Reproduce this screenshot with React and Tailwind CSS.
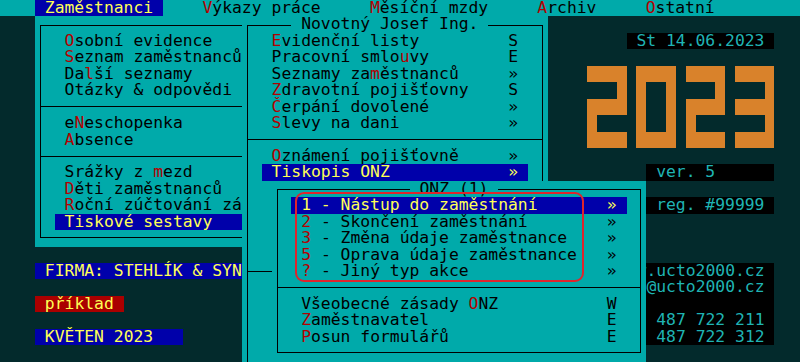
import React from "react";

// text-mode screen: one cell = 9.86px x 16.45px, column 0 starts at x = 5.42px

function K({ children }) {
  return <span className="text-[#b40000]">{children}</span>;
}

// label with one red hotkey letter at index k
function Hot({ text, k }) {
  if (k == null) return text;
  return (
    <>
      {text.slice(0, k)}
      <K>{text[k]}</K>
      {text.slice(k + 1)}
    </>
  );
}

function Sep() {
  return (
    <div className="flex h-[16.45px] items-center">
      <div className="h-px w-full bg-black" />
    </div>
  );
}

function Blank() {
  return <div className="h-[16.45px]" />;
}

function Win({ className, title, titleClass, children }) {
  return (
    <div className={"bg-[#00aaaa] px-[4.93px] py-[8.23px] " + className}>
      <div className="h-full border border-black text-black">
        <div className="-mt-[9.23px] flex h-[16.45px]">
          {title && (
            <span className={"whitespace-pre bg-[#00aaaa] " + titleClass}>{title}</span>
          )}
        </div>
        {children}
      </div>
    </div>
  );
}

function LeftItem({ text, k }) {
  return (
    <div className="h-[16.45px] whitespace-pre pl-[23.65px]">
      <Hot text={text} k={k} />
    </div>
  );
}

function MidItem({ text, k, sc }) {
  return (
    <div className="flex h-[16.45px] whitespace-pre pl-[23.65px]">
      <span className="w-[236.64px] shrink-0">
        <Hot text={text} k={k} />
      </span>
      <span>{sc}</span>
    </div>
  );
}

function OnzItem({ text, k, sc }) {
  return (
    <div className="flex h-[16.45px] whitespace-pre pl-[23.65px]">
      <span className="w-[305.66px] shrink-0">
        <Hot text={text} k={k} />
      </span>
      <span>{sc}</span>
    </div>
  );
}

const DIGITS = {
  2: ["1111", "0001", "1111", "1000", "1111"],
  0: ["1111", "1001", "1001", "1001", "1111"],
  3: ["1111", "0001", "1111", "0001", "1111"],
};

function BigDigit({ d }) {
  const cells = DIGITS[d].join("").split("");
  return (
    <div className="grid grid-cols-[repeat(4,9.86px)] grid-rows-[repeat(5,16.45px)]">
      {cells.map((c, i) => (
        <div key={i} className={c === "1" ? "bg-[#d9822b]" : ""} />
      ))}
    </div>
  );
}

export default function App() {
  return (
    <div className="relative h-[362px] w-[800px] overflow-hidden bg-[#032a2c] font-['DejaVu_Sans_Mono',monospace] text-[16.38px] leading-[16.45px]">
      {/* menu bar */}
      <div className="flex h-[16.45px] whitespace-pre bg-[#00aaaa] pl-[5.42px] text-black">
        <span>{"   "}</span>
        <span className="bg-[#0000aa] text-[#ffff55]">{" Zaměstnanci "}</span>
        <span>{"    "}</span>
        <span>
          <K>V</K>ýkazy práce{"     "}
          <K>M</K>ěsíční mzdy{"     "}
          <K>A</K>rchiv{"     "}
          <K>O</K>statní
        </span>
      </div>

      <div className="ml-[5.42px] grid grid-cols-[repeat(81,9.86px)] grid-rows-[repeat(22,16.45px)]">
        {/* Zaměstnanci menu */}
        <Win className="col-[4/32] row-[1/15]">
          <LeftItem text="Osobní evidence" k={0} />
          <LeftItem text="Seznam zaměstnanců" k={0} />
          <LeftItem text="Další seznamy" k={2} />
          <LeftItem text="Otázky & odpovědi" />
          <Sep />
          <LeftItem text="eNeschopenka" k={1} />
          <LeftItem text="Absence" k={0} />
          <Sep />
          <LeftItem text="Srážky z mezd" k={9} />
          <LeftItem text="Děti zaměstnanců" k={0} />
          <LeftItem text="Roční zúčtování záloh" k={0} />
          <div className="ml-[13.79px] h-[16.45px] whitespace-pre bg-[#0000aa] pl-[9.86px] text-[#ffff55]">
            Tiskové sestavy
          </div>
        </Win>

        {/* status bars */}
        <div className="col-[4/28] row-[16/17] whitespace-pre bg-[#0000aa] text-[#ffff55]">
          {" FIRMA: STEHLÍK & SYNOVÉ"}
        </div>
        <div className="col-[4/13] row-[18/19] whitespace-pre bg-[#aa0000] text-[#ffff55]">
          {" příklad"}
        </div>
        <div className="col-[4/19] row-[20/21] whitespace-pre bg-[#0000aa] text-[#ffff55]">
          {" KVĚTEN 2023"}
        </div>

        {/* right info */}
        <div className="col-[64/79] row-[2/3] whitespace-pre bg-black pl-[9.86px] text-[#1fb4b4]">
          St 14.06.2023
        </div>
        <div className="col-[60/79] row-[4/9] flex gap-[9.86px]">
          {"2023".split("").map((d, i) => (
            <BigDigit key={i} d={d} />
          ))}
        </div>
        <div className="col-[66/79] row-[10/11] whitespace-pre bg-black pl-[9.86px] text-[#1fb4b4]">
          ver. 5
        </div>
        <div className="col-[66/79] row-[12/13] whitespace-pre bg-black pl-[9.86px] text-[#1fb4b4]">
          reg. #99999
        </div>
        <div className="col-[59/79] row-[16/21] whitespace-pre bg-black pr-[9.86px] text-right text-[#1fb4b4]">
          <div className="h-[16.45px]">www.ucto2000.cz</div>
          <div className="h-[16.45px]">info@ucto2000.cz</div>
          <div className="h-[16.45px]" />
          <div className="h-[16.45px]">487 722 211</div>
          <div className="h-[16.45px]">487 722 312</div>
        </div>

        {/* employee submenu */}
        <Win className="col-[25/56] row-[1/23]" title=" Novotný Josef Ing. " titleClass="ml-[43.37px]">
          <MidItem text="Evidenční listy" k={0} sc="S" />
          <MidItem text="Pracovní smlouvy" k={13} sc="E" />
          <MidItem text="Seznamy zaměstnanců" k={10} sc="»" />
          <MidItem text="Zdravotní pojišťovny" k={0} sc="S" />
          <MidItem text="Čerpání dovolené" k={0} sc="»" />
          <MidItem text="Slevy na dani" k={0} sc="»" />
          <Sep />
          <MidItem text="Oznámení pojišťovně" k={0} sc="»" />
          <div className="ml-[13.79px] flex h-[16.45px] w-[266.22px] whitespace-pre bg-[#0000aa] pl-[9.86px] text-[#ffff55]">
            <span className="w-[236.64px] shrink-0">Tiskopis ONZ</span>
            <span>»</span>
          </div>
          <Blank />
          <Blank />
          <Blank />
          <Blank />
          <Blank />
          <Sep />
        </Win>

        {/* ONZ submenu */}
        <Win className="col-[28/66] row-[11/22]" title=" ONZ (1) " titleClass="ml-[132.11px]">
          <div className="ml-[13.79px] flex h-[16.45px] w-[335.24px] whitespace-pre bg-[#0000aa] pl-[9.86px] text-[#ffff55]">
            <span className="w-[305.66px] shrink-0">1 - Nástup do zaměstnání</span>
            <span>»</span>
          </div>
          <OnzItem text="2 - Skončení zaměstnání" k={0} sc="»" />
          <OnzItem text="3 - Změna údaje zaměstnance" k={0} sc="»" />
          <OnzItem text="5 - Oprava údaje zaměstnance" k={0} sc="»" />
          <OnzItem text="? - Jiný typ akce" k={0} sc="»" />
          <Sep />
          <OnzItem text="Všeobecné zásady ONZ" k={17} sc="W" />
          <OnzItem text="Zaměstnavatel" k={0} sc="E" />
          <OnzItem text="Posun formulářů" k={0} sc="E" />
        </Win>
      </div>

      {/* red marker drawn over the ONZ items */}
      <div className="pointer-events-none absolute left-[295px] top-[191.5px] h-[90.5px] w-[289px] rounded-[9px] border-2 border-[#e0242c]" />
    </div>
  );
}
